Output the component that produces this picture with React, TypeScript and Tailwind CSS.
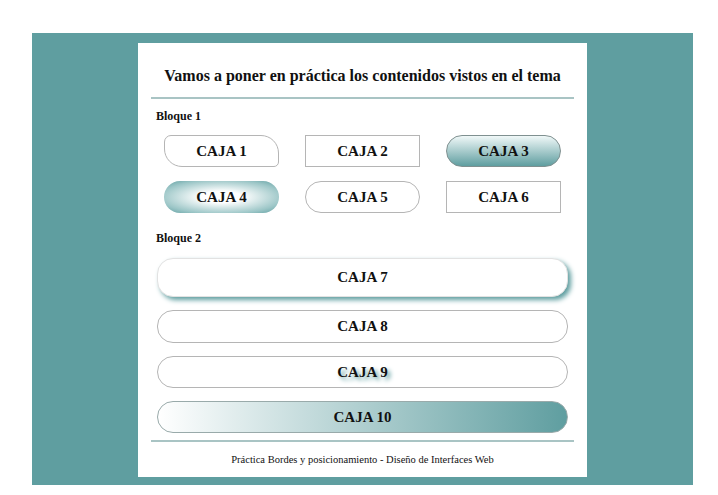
import React from "react";

const serif = { fontFamily: '"Liberation Serif", "Times New Roman", serif' };

export default function App() {
  const box = "h-[31px] w-[115px] mx-auto flex items-center justify-center text-[15px] font-bold text-[#111]";
  const wide = "mx-[6px] flex items-center justify-center text-[15px] font-bold text-[#111] rounded-[16px]";
  return (
    <div className="w-[718px] h-[495px] bg-white pt-[33px] pl-[32px]" style={serif}>
      <div className="w-[661px] h-[452px] bg-[#5f9ea0] pt-[10px]">
        <div className="mx-auto w-[449px] h-[434px] bg-white px-[13px] flex flex-col">
          <h1 className="text-[16px] font-bold text-[#111] text-center pt-[23px] leading-[20px]">
            Vamos a poner en práctica los contenidos vistos en el tema
          </h1>
          <div className="mt-[11px] h-[2px] bg-[#a9c4c4]" />
          <h2 className="mt-[10px] ml-[5px] text-[12px] font-bold leading-[14px] text-[#111]">Bloque 1</h2>
          <div className="grid grid-cols-3 gap-y-[14px] mt-[12px]">
            <div className={`${box} h-[32px] border border-[#b5b5b5] rounded-[7px_18px_5px_18px] bg-white`}>CAJA 1</div>
            <div className={`${box} h-[32px] border border-[#b5b5b5] bg-white`}>CAJA 2</div>
            <div className={`${box} h-[32px] border border-[#7f9090] rounded-full bg-[linear-gradient(to_bottom,#f0f8f8,#5f9ea0)]`}>CAJA 3</div>
            <div className={`${box} h-[32px] rounded-full bg-[radial-gradient(ellipse_at_center,#ffffff_25%,#9cc6c7_75%,#5f9ea0)]`}>CAJA 4</div>
            <div className={`${box} h-[32px] border border-[#b5b5b5] rounded-full bg-white`}>CAJA 5</div>
            <div className={`${box} h-[32px] border border-[#b5b5b5] bg-white`}>CAJA 6</div>
          </div>
          <h2 className="mt-[18px] ml-[5px] text-[12px] font-bold leading-[14px] text-[#111]">Bloque 2</h2>
          <div className="flex flex-col gap-[13px] mt-[13px]">
            <div className={`${wide} h-[39px] border border-[#e2e2e2] bg-white shadow-[3px_3px_5px_#5f9ea0]`}>CAJA 7</div>
            <div className={`${wide} h-[33px] border border-[#b5b5b5] bg-white`}>CAJA 8</div>
            <div className={`${wide} h-[32px] border border-[#b5b5b5] bg-white`}>
              <span className="[text-shadow:3px_3px_4px_#5f9ea0]">CAJA 9</span>
            </div>
            <div className={`${wide} h-[32px] border border-[#9aa] bg-[linear-gradient(to_right,#ffffff,#5f9ea0)]`}>CAJA 10</div>
          </div>
          <div className="mt-[7px] h-[2px] bg-[#a9c4c4]" />
          <p className="text-center text-[10.5px] text-[#111] mt-[12px] leading-[12px]">
            Práctica Bordes y posicionamiento - Diseño de Interfaces Web
          </p>
        </div>
      </div>
    </div>
  );
}
